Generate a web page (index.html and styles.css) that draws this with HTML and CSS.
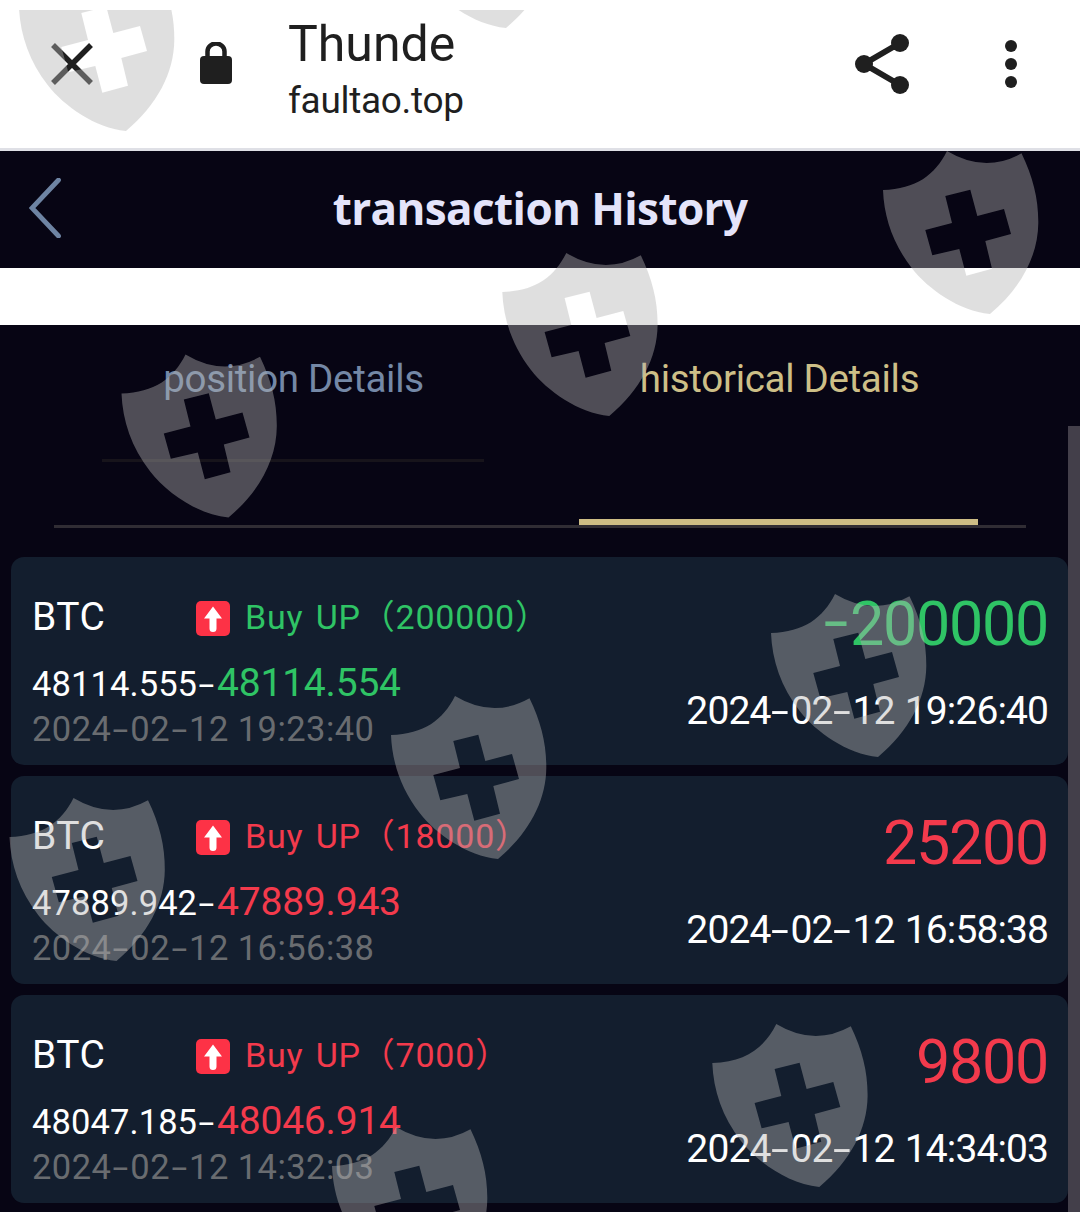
FILE: index.html
```html
<!DOCTYPE html>
<html lang="en">
<head>
<meta charset="utf-8">
<title>transaction History</title>
<link rel="stylesheet" href="styles.css">
</head>
<body>
<div class="screen">
  <header class="browser">
    <svg class="close" viewBox="0 0 44 44"><path d="M3 3L41 41M41 3L3 41"/></svg>
    <svg class="lock" viewBox="0 0 32 42"><rect y="14" width="32" height="28" rx="4"/><path d="M7.500 15V9.500a8.500 8 0 0 1 17 0V15"/></svg>
    <div class="site">
      <div class="site-name">Thunde</div>
      <div class="site-host">faultao.top</div>
    </div>
    <svg class="share" viewBox="0 0 54 60"><path d="M45 9L9 30L45 51"/><circle cx="9" cy="30" r="9"/><circle cx="45" cy="9" r="9"/><circle cx="45" cy="51" r="9"/></svg>
    <svg class="more" viewBox="0 0 12 48"><circle cx="6" cy="6" r="6"/><circle cx="6" cy="24" r="6"/><circle cx="6" cy="42" r="6"/></svg>
  </header>

  <div class="titlebar">
    <svg class="back" viewBox="0 0 32 60"><path d="M29.500 2L3 30L29.500 58"/></svg>
    <h1>transaction History</h1>
  </div>
  <div class="gap"></div>

  <main>
    <div class="tabs">
      <div class="tab position">position Details</div>
      <div class="tab active">historical Details</div>
    </div>
    <div class="subline"></div>
    <div class="indicator"></div>
    <div class="rule"></div>

    <section class="list">
      <article class="card win">
        <div class="left">
          <div class="head"><span class="coin">BTC</span><svg class="arrow" viewBox="0 0 34 35"><rect width="34" height="35" rx="5"/><path d="M17 5.500L26 17.500H20.500V27.500a3.500 3.500 0 0 1-7 0V17.500H8Z"/></svg><span class="side">Buy UP（200000）</span></div>
          <div class="price"><span class="open">48114.555<i>-</i></span><span class="end">48114.554</span></div>
          <div class="opened">2024<i>-</i>02<i>-</i>12 19:23:40</div>
        </div>
        <div class="right">
          <div class="amount"><i>-</i>200000</div>
          <div class="closed">2024<i>-</i>02<i>-</i>12 19:26:40</div>
        </div>
      </article>
      <article class="card">
        <div class="left">
          <div class="head"><span class="coin">BTC</span><svg class="arrow" viewBox="0 0 34 35"><rect width="34" height="35" rx="5"/><path d="M17 5.500L26 17.500H20.500V27.500a3.500 3.500 0 0 1-7 0V17.500H8Z"/></svg><span class="side">Buy UP（18000）</span></div>
          <div class="price"><span class="open">47889.942<i>-</i></span><span class="end">47889.943</span></div>
          <div class="opened">2024<i>-</i>02<i>-</i>12 16:56:38</div>
        </div>
        <div class="right">
          <div class="amount">25200</div>
          <div class="closed">2024<i>-</i>02<i>-</i>12 16:58:38</div>
        </div>
      </article>
      <article class="card">
        <div class="left">
          <div class="head"><span class="coin">BTC</span><svg class="arrow" viewBox="0 0 34 35"><rect width="34" height="35" rx="5"/><path d="M17 5.500L26 17.500H20.500V27.500a3.500 3.500 0 0 1-7 0V17.500H8Z"/></svg><span class="side">Buy UP（7000）</span></div>
          <div class="price"><span class="open">48047.185<i>-</i></span><span class="end">48046.914</span></div>
          <div class="opened">2024<i>-</i>02<i>-</i>12 14:32:03</div>
        </div>
        <div class="right">
          <div class="amount">9800</div>
          <div class="closed">2024<i>-</i>02<i>-</i>12 14:34:03</div>
        </div>
      </article>
    </section>
  </main>

  <div class="scrollbar"></div>

  <svg class="watermark" viewBox="0 10 1080 1202">
    <defs>
      <path id="shield" fill-rule="evenodd" d="M64 0Q102 22.800 138.500 2.300C150 26 155.500 48 155.300 72C155 105 138 137 107 163C76 160 45 138 28.700 117C10 93 1 66 0 39C33 38 52 24 64 0ZM62.300 45L69 72L42.300 79L49.300 104.300L76.300 98L83.300 124.700L109 117.700L102.300 90L128 83L121 58L94.300 65L87.300 38.700Z"/>
    </defs>
    <use href="#shield" x="19" y="-32"/>
    <use href="#shield" x="399" y="-135"/>
    <use href="#shield" x="883" y="151"/>
    <use href="#shield" x="502.300" y="253"/>
    <use href="#shield" x="121.500" y="354.500"/>
    <use href="#shield" x="771" y="594"/>
    <use href="#shield" x="391" y="696"/>
    <use href="#shield" x="9.500" y="798"/>
    <use href="#shield" x="712.300" y="1024"/>
    <use href="#shield" x="332" y="1127"/>
  </svg>
</div>
</body>
</html>
```
FILE: styles.css
```css
* { box-sizing: border-box; }
body { margin: 0; background: #070514; font-family: Roboto, "Noto Sans CJK SC", sans-serif; }
svg { display: block; flex: none; }
i { font-style: normal; }

.screen { position: relative; width: 1080px; height: 1212px; overflow: hidden; white-space: nowrap; }

.browser {
  display: flex; align-items: flex-start; height: 151px;
  padding-left: 50px; background: #fff; border-bottom: 3px solid #dfe0e6; color: #1f1f1f;
}
.close { width: 44px; height: 44px; margin-top: 42px; fill: none; stroke: #1f1f1f; stroke-width: 5.5; }
.lock { width: 32px; height: 42px; margin: 42px 0 0 106px; fill: #1f1f1f; }
.lock path { fill: none; stroke: #1f1f1f; stroke-width: 4.5; }
.site { width: 566px; margin-left: 56px; padding-top: 14px; }
.site-name { font-size: 50px; line-height: 60px; }
.site-host { font-size: 37px; line-height: 50px; margin-top: 2px; letter-spacing: -0.300px; }
.share { width: 54px; height: 60px; margin-top: 34px; margin-left: 1px; fill: #1f1f1f; }
.share path { fill: none; stroke: #1f1f1f; stroke-width: 6; }
.more { width: 12px; height: 48px; margin: 40px 0 0 96px; fill: #1f1f1f; }

.titlebar { display: flex; align-items: center; height: 117px; padding-left: 29px; background: #070514; }
.back { width: 32px; height: 60px; margin-bottom: 3px; fill: none; stroke: #6e84a3; stroke-width: 4.8; stroke-linecap: round; }
h1 { flex: 1; margin: 0 61px 4px 0; text-align: center; font: bold 44px/60px "Open Sans", sans-serif; letter-spacing: -0.600px; color: #e4e4fa; }
.gap { height: 57px; background: #fff; }

.tabs { display: grid; grid-template-columns: 1fr 1fr; padding: 31px 54px 0; }
.tab { font-size: 38.500px; line-height: 46px; text-align: center; letter-spacing: -0.300px; color: #7488a6; }
.position { padding-right: 7px; }
.active { padding-right: 7px; color: #cdbf87; }
.subline { width: 382px; height: 3px; margin: 57px 0 0 102px; background: #17141b; }
.indicator { width: 399px; height: 6px; margin: 57px 0 0 579px; background: #cdbd85; }
.rule { width: 972px; height: 3px; margin-left: 54px; background: #302d34; }

.list { display: grid; gap: 11px; padding: 29px 12px 0 11px; }
.card {
  display: flex; justify-content: space-between; height: 208px;
  padding: 40px 20px 0 21px; border-radius: 13px; background: #131e2e; color: #fff; --tone: #f33a4c;
}
.win { --tone: #2fc465; }
.head { display: flex; height: 40px; }
.coin { width: 164px; font-size: 39px; line-height: 40px; letter-spacing: 0.500px; }
.arrow { width: 34px; height: 35px; margin-top: 4px; fill: #fd3246; }
.arrow path { fill: #fff; }
.side { margin-left: 15px; font-size: 34px; line-height: 40px; letter-spacing: 0.800px; word-spacing: 3px; color: var(--tone); }
.price { display: flex; align-items: baseline; height: 40px; margin-top: 26px; line-height: 40px; }
.open { width: 185px; font-size: 34.500px; letter-spacing: 0.100px; }
.end { font-size: 39px; color: var(--tone); letter-spacing: -0.200px; }
.opened { margin-top: 6px; font-size: 34.500px; line-height: 40px; letter-spacing: 0.450px; color: #696c70; }
.right { margin-top: -3px; text-align: right; }
.amount { font-size: 61px; line-height: 60px; letter-spacing: -1.300px; color: var(--tone); }
.closed { margin-top: 37px; font-size: 39px; line-height: 40px; letter-spacing: -0.900px; word-spacing: 1.500px; }
.price i, .opened i, .closed i, .amount i { display: inline-block; width: 19px; text-align: center; transform: scaleX(1.650); letter-spacing: 0; }
.closed i { width: 20px; }
.amount i { width: 28px; transform: translateY(-3px) scaleX(1.450); }

.scrollbar { position: absolute; right: 0; top: 426px; bottom: 0; width: 12px; background: #433f4a; }
.watermark { position: absolute; left: 0; top: 10px; width: 1080px; height: 1202px; fill: rgba(179, 179, 179, 0.420); pointer-events: none; }
```
